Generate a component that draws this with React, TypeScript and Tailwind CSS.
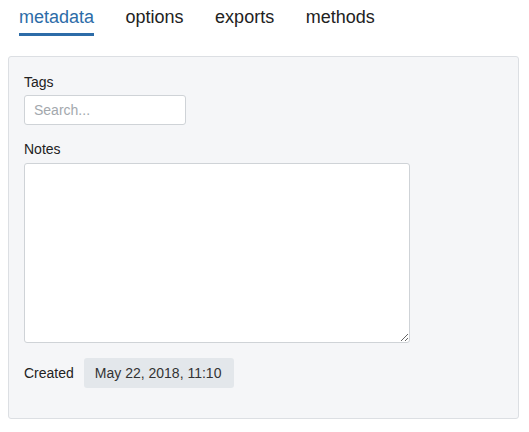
import React, { useState } from "react";

const tabs = ["metadata", "options", "exports", "methods"];

export default function App() {
  const [active, setActive] = useState("metadata");

  return (
    <div className="w-[529px] h-[432px] bg-white font-['Liberation_Sans',Arial,sans-serif] text-[#222]">
      {/* Tab strip */}
      <div className="flex gap-[31.5px] pl-[19px]">
        {tabs.map((t) => (
          <button
            key={t}
            onClick={() => setActive(t)}
            className={
              t === active
                ? "pt-[6px] pb-[5px] text-[18px] leading-[22px] text-[#2d6ca8] border-b-[3px] border-[#2d6ca8]"
                : "pt-[6px] pb-[5px] text-[18px] leading-[22px] text-[#222] border-b-[3px] border-transparent"
            }
          >
            {t}
          </button>
        ))}
      </div>

      {/* Panel */}
      <div className="mx-[8px] mt-[20px] w-[511px] rounded-[3px] border border-[#dcdfe3] bg-[#f5f6f8] px-[15px] pt-[15px] pb-[30px] text-[14px] leading-[20px]">
        <div className="mb-[3px]">Tags</div>
        <input
          placeholder="Search..."
          className="block h-[30px] w-[162px] rounded-[3px] border border-[#cfd3d7] bg-white px-[9px] text-[14px] outline-none placeholder:text-[#a3a8ad]"
        />

        <div className="mt-[14px] mb-[4px]">Notes</div>
        <textarea className="block h-[180px] w-[386px] rounded-[3px] border border-[#cfd3d7] bg-white p-2 text-[14px] outline-none" />

        <div className="mt-[15px] flex items-center gap-[10px]">
          <span>Created</span>
          <span className="h-[30px] rounded-[3px] bg-[#e3e7eb] pl-[11px] pr-[13px] leading-[30px] text-[#333]">
            May 22, 2018, 11:10
          </span>
        </div>
      </div>
    </div>
  );
}
